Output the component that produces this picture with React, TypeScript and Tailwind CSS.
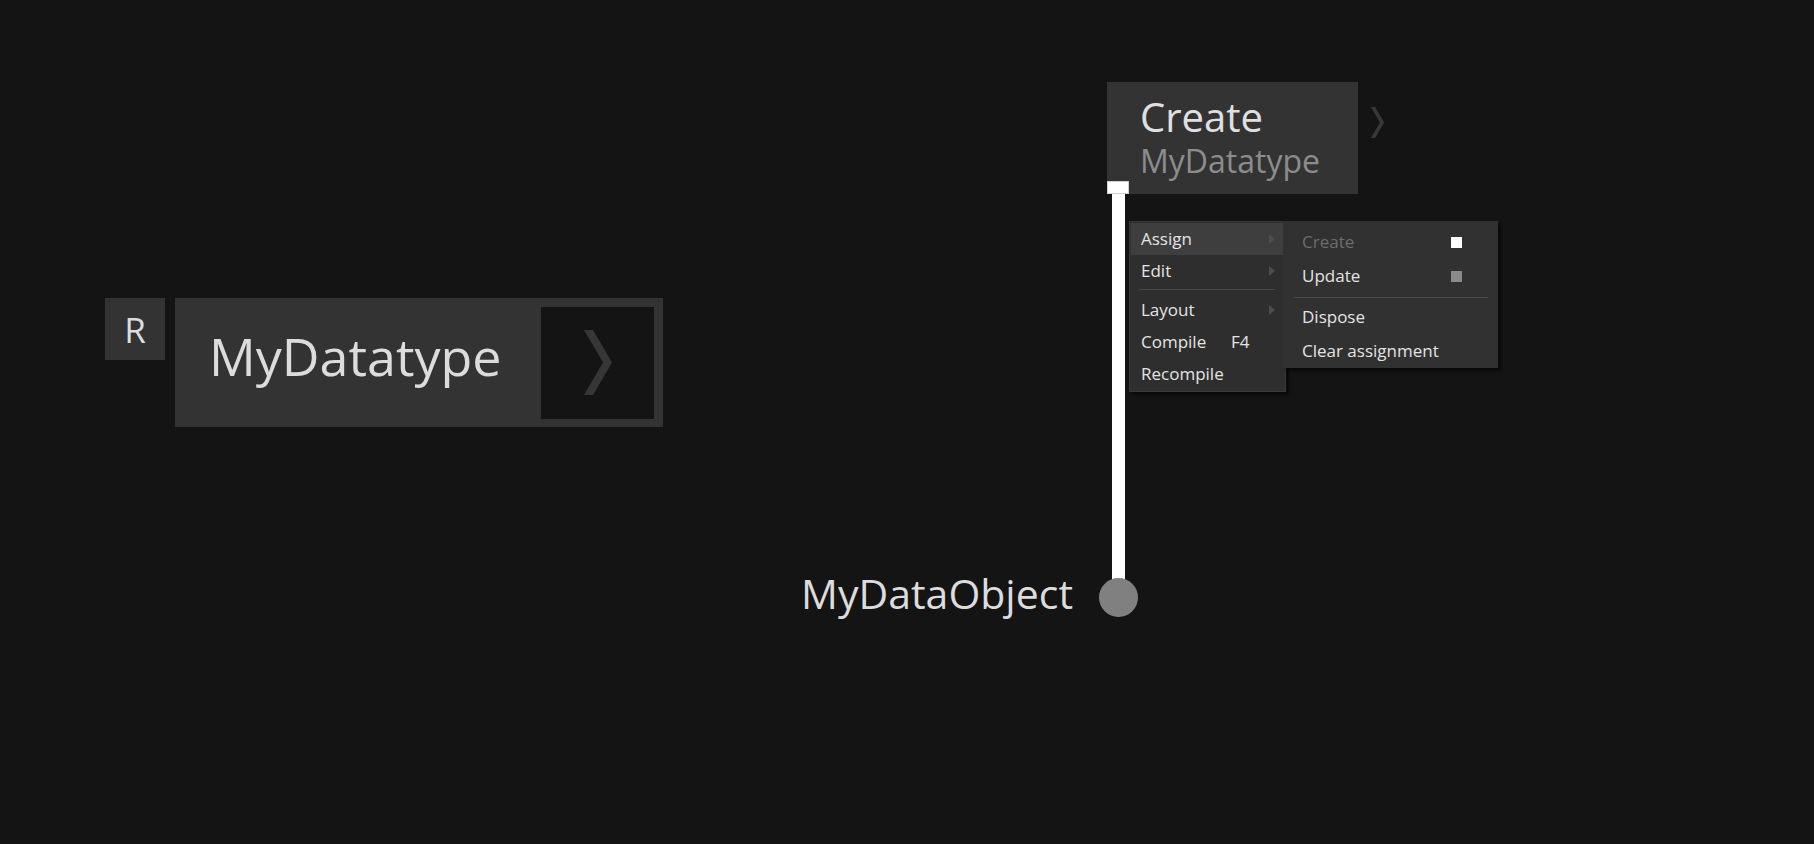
import React from "react";

const menuItems = [
  { label: "Assign", arrow: true, active: true },
  { label: "Edit", arrow: true },
  { sep: true },
  { label: "Layout", arrow: true },
  { label: "Compile", shortcut: "F4" },
  { label: "Recompile" },
];

const subItems = [
  { label: "Create", disabled: true, mark: "bg-white" },
  { label: "Update", mark: "bg-[#8a8a8a]" },
  { sep: true },
  { label: "Dispose" },
  { label: "Clear assignment" },
];

function Chevron({ className }: { className?: string }) {
  return (
    <svg viewBox="0 0 28 65" className={className}>
      <polygon points="0,0 9,0 28,32.5 9,65 0,65 19,32.5" fill="currentColor" />
    </svg>
  );
}

function MenuArrow() {
  return (
    <svg width="6" height="10" viewBox="0 0 6 10" className="absolute right-[9px] top-[11px] text-[#4d4d4d]">
      <polygon points="0,0 6,5 0,10" fill="currentColor" />
    </svg>
  );
}

export default function App() {
  return (
    <div
      className="relative w-[1814px] h-[844px] overflow-hidden bg-[#141414] text-[#dcdcdc]"
      style={{ fontFamily: '"Open Sans", "Noto Sans", sans-serif' }}
    >
      {/* reference badge */}
      <div className="absolute left-[105px] top-[298px] w-[60px] h-[62px] bg-[#333333] flex items-center justify-center text-[35px] leading-none">
        R
      </div>

      {/* datatype node */}
      <div className="absolute left-[175px] top-[298px] w-[488px] h-[129px] bg-[#333333] flex items-center justify-between pl-[34px] pr-[9px]">
        <span className="text-[52px] leading-none mb-[14px]">MyDatatype</span>
        <div className="w-[113px] h-[112px] bg-[#141414] relative">
          <Chevron className="absolute left-[43px] top-[23px] w-[28px] h-[65px] text-[#363636]" />
        </div>
      </div>

      {/* create node */}
      <div className="absolute left-[1107px] top-[82px] w-[251px] h-[112px] bg-[#333333] pl-[33px] pt-[16px]">
        <div className="text-[40px] leading-[38px] text-[#e0e0e0]">Create</div>
        <div className="mt-[8px] text-[32px] leading-[34px] text-[#8c8c8c]">MyDatatype</div>
      </div>
      <Chevron className="absolute left-[1370px] top-[107px] w-[15px] h-[31px] text-[#383838]" />

      {/* connection */}
      <div className="absolute left-[1112px] top-[190px] w-[13px] h-[392px] bg-white" />
      <div className="absolute left-[1107px] top-[181px] w-[22px] h-[13px] bg-white border border-[#d0d0d0]" />
      <div className="absolute left-[1099px] top-[578px] w-[39px] h-[39px] rounded-full bg-[#808080]" />
      <div className="absolute right-[741px] top-[573px] text-[41px] leading-none text-[#dcdcdc]">MyDataObject</div>

      {/* context menu */}
      <div className="absolute left-[1129px] top-[221px] w-[157px] bg-[#2e2e2e] border border-[#3a3a3a] pt-[1px] pb-[1px] px-[1px] shadow-[3px_3px_3px_rgba(0,0,0,0.55)] text-[17px] text-[#e4e4e4]">
        {menuItems.map((it, i) =>
          it.sep ? (
            <div key={i} className="h-[7px] pt-[2px] pl-[8px] pr-[9px]">
              <div className="h-px bg-[#474747]" />
            </div>
          ) : (
            <div
              key={i}
              className={`relative h-[32px] leading-[32px] pl-[10px] flex ${it.active ? "bg-[#3e3e3e]" : ""}`}
            >
              <span className={it.shortcut ? "w-[90px]" : ""}>{it.label}</span>
              {it.shortcut && <span>{it.shortcut}</span>}
              {it.arrow && <MenuArrow />}
            </div>
          )
        )}
      </div>

      {/* submenu */}
      <div className="absolute left-[1283px] top-[221px] w-[215px] bg-[#313131] pt-[4px] shadow-[3px_3px_3px_rgba(0,0,0,0.55)] text-[17px] text-[#e4e4e4]">
        {subItems.map((it, i) =>
          it.sep ? (
            <div key={i} className="h-[7px] pt-[4px] pl-[11px] pr-[10px]">
              <div className="h-px bg-[#4a4a4a]" />
            </div>
          ) : (
            <div key={i} className="relative h-[34px] leading-[34px] pl-[19px]">
              <span className={it.disabled ? "text-[#6d6d6d]" : ""}>{it.label}</span>
              {it.mark && <div className={`absolute left-[168px] top-[12px] w-[11px] h-[11px] ${it.mark}`} />}
            </div>
          )
        )}
      </div>
    </div>
  );
}
